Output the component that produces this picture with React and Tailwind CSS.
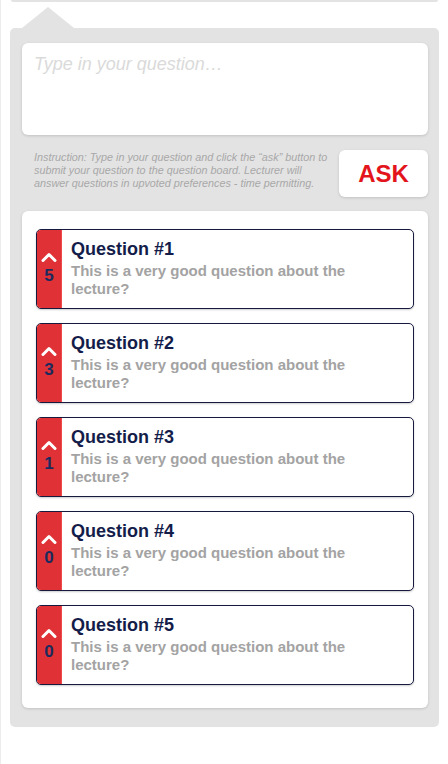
const questions = [
    { id: 1, votes: 5 },
    { id: 2, votes: 3 },
    { id: 3, votes: 1 },
    { id: 4, votes: 0 },
    { id: 5, votes: 0 },
];

const Chevron = () => (
    <svg width="16" height="10" viewBox="0 0 16 10" fill="none">
        <path d="M2 8.5 L8 2.5 L14 8.5" stroke="white" strokeWidth="3" strokeLinecap="round" strokeLinejoin="round" />
    </svg>
);

const QuestionCard = ({ id, votes }) => (
    <div className="flex h-[80px] overflow-hidden rounded-[5px] border-[1.5px] border-[#161a3e] bg-white shadow-[0_1px_2px_rgba(0,0,0,0.2)]">
        <div className="flex w-[25px] shrink-0 flex-col items-center border-r border-[#ee4a4a] bg-[#e03236] pt-[22px]">
            <Chevron />
            <span className="mt-[5px] text-[17px] font-bold leading-none text-[#1b2a5c]">{votes}</span>
        </div>
        <div className="pl-[9px] pt-[8px]">
            <div className="text-[18px] font-bold leading-[22px] text-[#141d4a]">Question #{id}</div>
            <div className="mt-[2px] max-w-[290px] text-[15px] font-bold leading-[18px] text-[#a3a3a3]">
                This is a very good question about the lecture?
            </div>
        </div>
    </div>
);

const App = () => {
    return (
        <div
            className="h-[764px] w-[448px] overflow-hidden border-l border-[#ececec] bg-white"
            style={{ fontFamily: '"Liberation Sans", Arial, sans-serif' }}
        >
            <div className="mx-[10px] h-[2px] rounded-b-[3px] bg-[#e3e3e3]" />
            <div className="ml-[21px] mt-[5px] h-[21px]">
                <svg width="52" height="21" viewBox="0 0 52 21">
                    <polygon points="0,21 26,0 52,21" fill="#e3e3e3" />
                </svg>
            </div>
            <div className="mx-[9px] rounded-[5px] bg-[#e3e3e3] pb-[19px] pl-[12px] pr-[11px] pt-[15px]">
                <div className="h-[92px] rounded-[6px] bg-white px-[12px] pt-[8px] shadow-[0_1px_3px_rgba(0,0,0,0.15)]">
                    <span className="text-[18px] italic text-[#dadada]">Type in your question…</span>
                </div>
                <div className="mt-[15px] flex items-start justify-between">
                    <p className="w-[306px] pl-[12px] pt-[1px] text-[10.8px] italic leading-[13px] text-[#a8a8a8]">
                        Instruction: Type in your question and click the “ask” button to submit your question to the question board. Lecturer will answer questions in upvoted preferences - time permitting.
                    </p>
                    <button className="flex h-[47px] w-[89px] items-center justify-center rounded-[6px] bg-white text-[24px] font-bold text-[#e3141b] shadow-[0_1px_3px_rgba(0,0,0,0.15)]">
                        ASK
                    </button>
                </div>
                <div className="mt-[14px] flex flex-col gap-[14px] rounded-[6px] bg-white px-[14px] pb-[23px] pt-[18px] shadow-[0_1px_3px_rgba(0,0,0,0.15)]">
                    {questions.map((q) => (
                        <QuestionCard key={q.id} {...q} />
                    ))}
                </div>
            </div>
        </div>
    );
};

export default App;
